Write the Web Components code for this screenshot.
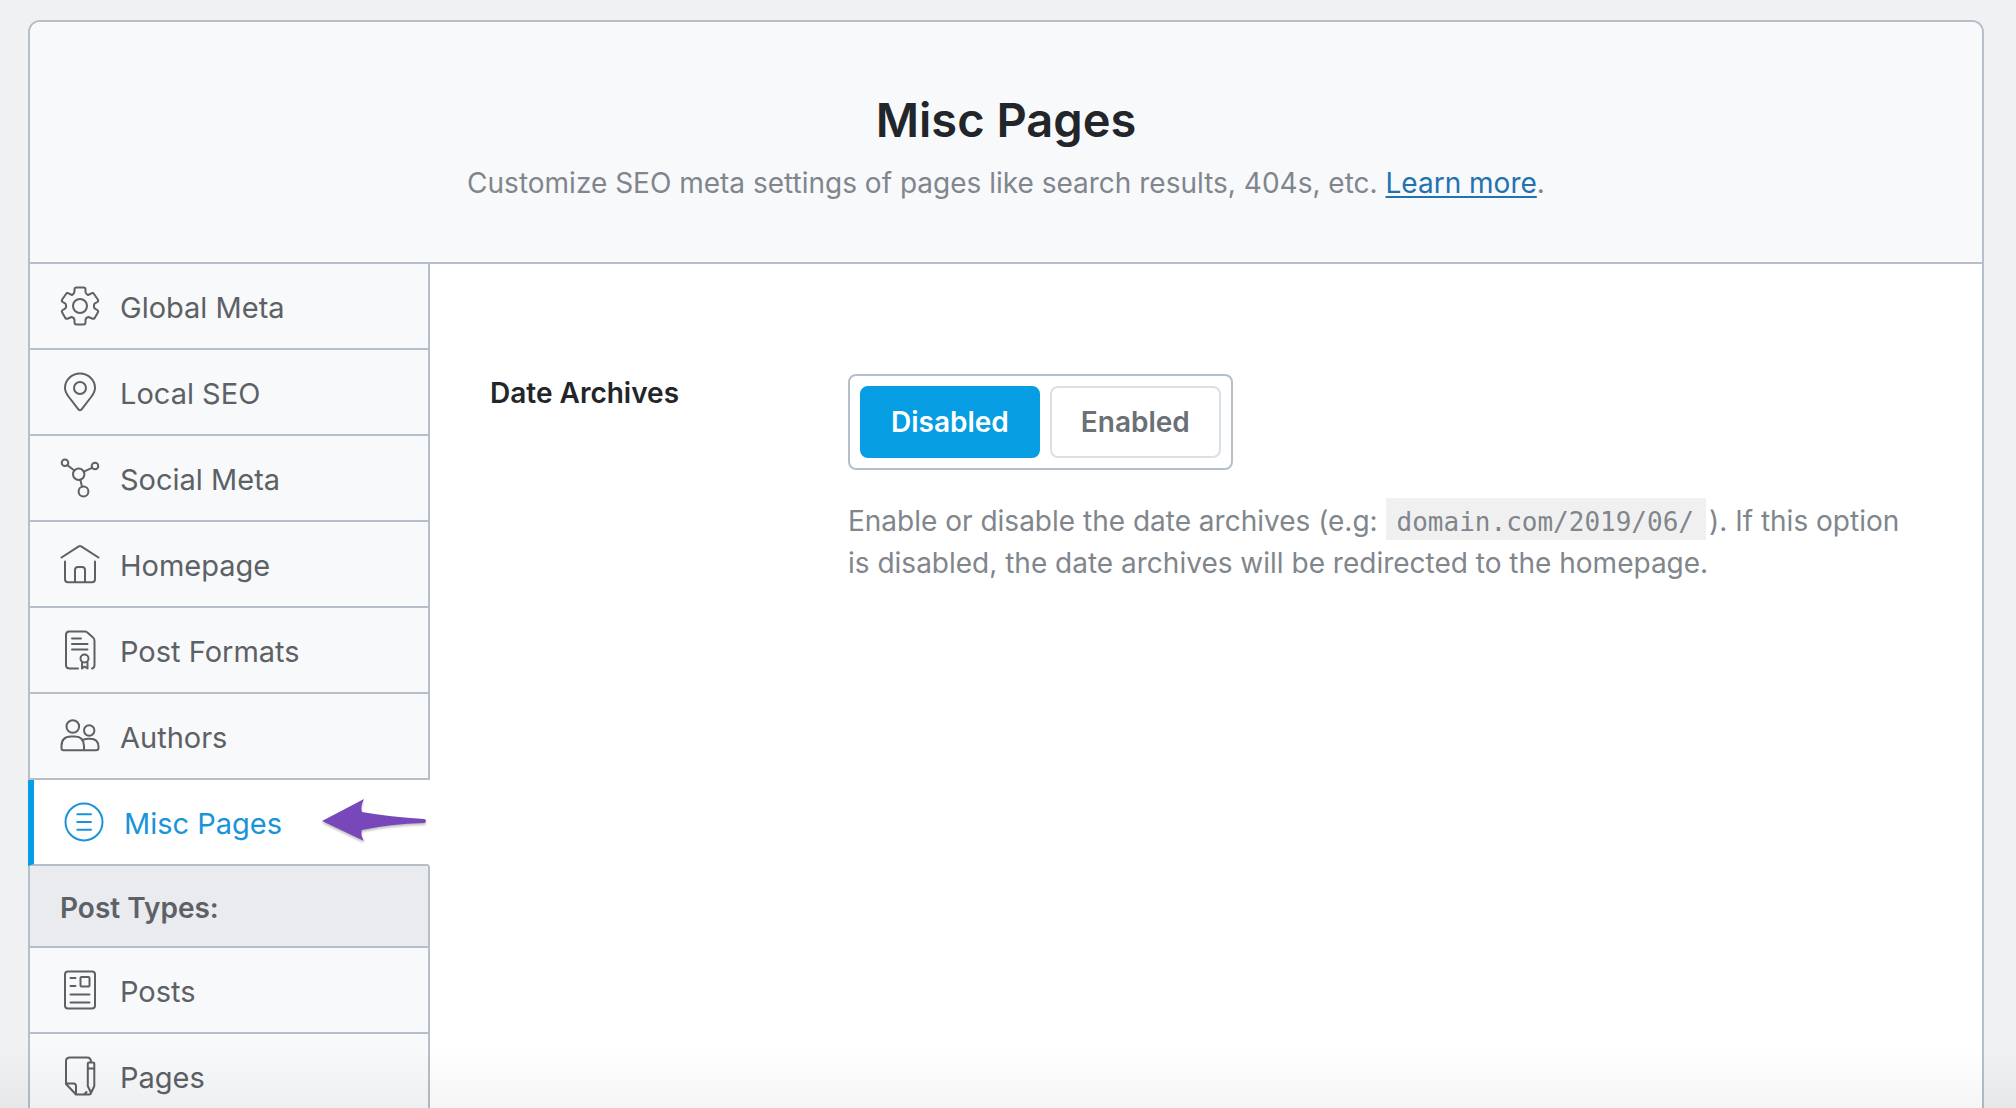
<!DOCTYPE html>
<html lang="en">
<head>
<meta charset="utf-8">
<title>Misc Pages</title>
<style>
    body {
        margin: 0;
        font-family: Inter, "Liberation Sans", sans-serif;
        background: #eff1f3;
    }
</style>
</head>
<body>

<settings-page>
    <settings-header slot="header">
        <span slot="title">Misc Pages</span>
        Customize SEO meta settings of pages like search results, 404s, etc. <a href="#learn">Learn more</a>.
    </settings-header>

    <settings-nav slot="nav">
        <nav-item icon="gear">Global Meta</nav-item>
        <nav-item icon="pin">Local SEO</nav-item>
        <nav-item icon="social">Social Meta</nav-item>
        <nav-item icon="home">Homepage</nav-item>
        <nav-item icon="format">Post Formats</nav-item>
        <nav-item icon="users">Authors</nav-item>
        <nav-item icon="list" active>Misc Pages<pointer-arrow slot="end"></pointer-arrow></nav-item>
        <nav-heading>Post Types:</nav-heading>
        <nav-item icon="post">Posts</nav-item>
        <nav-item icon="page">Pages</nav-item>
    </settings-nav>

    <settings-field label="Date Archives">
        <toggle-group label="Date Archives" options="Disabled,Enabled" value="Disabled"></toggle-group>
        <span slot="help">Enable or disable the date archives (e.g: <code-sample>domain.com/2019/06/</code-sample>). If this option is disabled, the date archives will be redirected to the homepage.</span>
    </settings-field>
</settings-page>

<script>
// 40x40 line icons
const ICONS = {
    gear: '<path d="M14.500 5V3.500Q14.500 1.500 16.500 1.500H23.500Q25.500 1.500 25.500 3.500V6Q25.700 8 28 9L31.500 7.300Q33.300 6.700 34 8L37.800 13.500Q38.700 15 37.300 16L34.500 17.700Q33.300 20 34.500 22.300L37.300 24Q38.700 25 37.800 26.500L34.700 32Q33.600 33.300 32 32.500L28.500 31Q25.700 31.500 25.500 34V36.500Q25.500 38.500 23.500 38.500H16.500Q14.500 38.500 14.500 36.500V34Q14.300 31.500 11.500 31L8 32.500Q6.400 33.300 5.300 32L2.200 26.500Q1.300 25 2.700 24L5.500 22.300Q6.700 20 5.500 17.700L2.700 16Q1.300 15 2.200 13.500L6 8Q6.700 6.700 8.500 7.300L12 9Q14.300 8 14.500 5Z"/><circle cx="20" cy="20" r="7"/>',
    pin: '<path d="M20 38.300C18.800 38.300 18.300 37.300 17.600 36.300L8.500 24.500C6.200 21.300 5 19 5 16A15 14.500 0 0 1 35 16C35 19 33.800 21.300 31.500 24.500L22.400 36.300C21.700 37.300 21.200 38.300 20 38.300Z"/><circle cx="20" cy="16" r="6"/>',
    social: '<circle cx="5" cy="4.800" r="3.300"/><circle cx="35" cy="8" r="3.300"/><circle cx="18.700" cy="16.200" r="5.700"/><circle cx="23.500" cy="33.500" r="4.900"/><path d="M7.500 7.200L14.300 12.500M32 9.800L23.800 13.700M20.300 21.800L22 28.600"/>',
    home: '<path d="M1.500 13.500L18.800 2.300Q20 1.500 21.200 2.300L38.500 13.500M5 17.500V35Q5 38.300 8 38.300H32Q35 38.300 35 35V17.500M15 38V26Q15 23 18 23H22Q25 23 25 26V38"/>',
    format: '<path d="M18 38.500H10Q6 38.500 6 35V5Q6 1.500 9 1.500H25Q26.500 1.500 28 3L33 7.500Q34.500 8.500 34.500 11V35Q34.500 38 32 38.500M12 8.500H21M12 14H27.500M12 19.500H27.500"/><circle cx="24.500" cy="28.500" r="4"/><path d="M22 32.500V38.500L24.500 36.500L27.500 38.500V32.500"/>',
    users: '<circle cx="12.800" cy="10.500" r="6.300"/><circle cx="29.200" cy="14.500" r="5.200"/><path d="M1.500 32V30Q1.500 20.500 11 20.500H15Q24 20.500 24 30V34.200H3.500Q1.500 34.200 1.500 32ZM24 34.200H36Q38.500 34.200 38.500 32V31Q38.500 22.800 30 22.800H28Q24.500 22.800 22 24.500"/>',
    list: '<circle cx="20" cy="20" r="18.500"/><path d="M13.300 12.200H27M13.300 20H27M13.300 27.800H27"/>',
    post: '<rect x="5" y="1.500" width="30" height="37" rx="3"/><path d="M10.500 8H15.500M10.500 16H15.500M10.500 24.500H29.500M10.500 32.500H29.500"/><rect x="20.500" y="7" width="9" height="9.500" rx="1"/>',
    page: '<path d="M26.500 36L24 38.500H16L6 28V5Q6 1.500 10 1.500H27Q31 1.500 31 6M6 27.500H13.500Q16 27.500 16 30V38M24 38.500H29Q31 38.500 31 36.500M27.800 7.500Q27.800 6.500 29 6.500H33Q34.300 6.500 34.300 7.500V30L31.500 36H30.600L27.800 30ZM28 12.500H34"/>'
};

class SettingsPage extends HTMLElement {

    constructor() {
        super();
        this.attachShadow({ mode: 'open' });
    }

    connectedCallback() {
        this.shadowRoot.innerHTML = /* html */`
            <style>
            :host {
                display: block;
                box-sizing: border-box;
                height: 100vh;
                padding: 20px 32px 20px 28px;
                overflow: hidden auto;
                scrollbar-width: none;
            }
            .card {
                border: 2px solid #b5bfc9;
                border-radius: 12px;
                background: #fff;
            }
            .body {
                display: flex;
                align-items: stretch;
            }
            main {
                flex: 1;
                min-width: 0;
                padding: 110px 60px;
            }
            /* soft shade along the bottom edge of the window */
            .fade {
                position: fixed;
                left: 0;
                right: 0;
                bottom: 0;
                height: 60px;
                background: linear-gradient(transparent, rgba(0, 0, 0, .04));
                pointer-events: none;
            }
            </style>
            <div class="card">
                <slot name="header"></slot>
                <div class="body">
                    <slot name="nav"></slot>
                    <main><slot></slot></main>
                </div>
            </div>
            <div class="fade"></div>
        `;
    }

}

class SettingsHeader extends HTMLElement {

    constructor() {
        super();
        this.attachShadow({ mode: 'open' });
    }

    connectedCallback() {
        this.shadowRoot.innerHTML = /* html */`
            <style>
            :host {
                display: block;
                padding: 68px 40px 58px;
                border-bottom: 2px solid #b5bfc9;
                border-radius: 10px 10px 0 0;
                background: #f8f9fb;
                text-align: center;
            }
            h1 {
                margin: 0;
                font-size: 47px;
                font-weight: 600;
                line-height: 60px;
                color: #222529;
            }
            p {
                margin: 12px 0 0;
                font-size: 28px;
                line-height: 42px;
                color: #80868c;
            }
            ::slotted(a) {
                color: #2271b1;
                text-decoration: underline;
                text-decoration-thickness: 2px;
                text-underline-offset: 3px;
            }
            </style>
            <h1><slot name="title"></slot></h1>
            <p><slot></slot></p>
        `;
    }

}

class SettingsNav extends HTMLElement {

    constructor() {
        super();
        this.attachShadow({ mode: 'open' });
    }

    connectedCallback() {
        this.shadowRoot.innerHTML = /* html */`
            <style>
            :host {
                display: block;
                flex: none;
                width: 400px;
            }
            </style>
            <nav><slot></slot></nav>
        `;
    }

}

class NavItem extends HTMLElement {

    constructor() {
        super();
        this.attachShadow({ mode: 'open' });
    }

    connectedCallback() {
        this.shadowRoot.innerHTML = /* html */`
            <style>
            :host {
                display: block;
                border-right: 2px solid #b5bfc9;
                border-bottom: 2px solid #b5bfc9;
                background: #f8f9fb;
                color: #5d6165;
            }
            :host([active]) {
                margin-left: -2px;
                border-left: 6px solid #069de3;
                border-right-color: #fff;
                background: #fff;
                color: #1a94d8;
            }
            a {
                display: flex;
                align-items: center;
                gap: 20px;
                height: 84px;
                padding: 0 0 0 30px;
                font-size: 29px;
                color: inherit;
                text-decoration: none;
            }
            svg {
                flex: none;
                width: 40px;
                height: 40px;
                fill: none;
                stroke: currentColor;
                stroke-width: 2;
                stroke-linecap: round;
                stroke-linejoin: round;
            }
            span {
                padding-top: 2px;
            }
            ::slotted([slot=end]) {
                margin-left: auto;
            }
            </style>
            <a href="#${this.getAttribute('icon')}">
                <svg viewBox="0 0 40 40" aria-hidden="true">${ICONS[this.getAttribute('icon')]}</svg>
                <span><slot></slot></span>
                <slot name="end"></slot>
            </a>
        `;
    }

}

class NavHeading extends HTMLElement {

    constructor() {
        super();
        this.attachShadow({ mode: 'open' });
    }

    connectedCallback() {
        this.shadowRoot.innerHTML = /* html */`
            <style>
            :host {
                display: block;
                padding: 4px 30px 0;
                border-right: 2px solid #b5bfc9;
                border-bottom: 2px solid #b5bfc9;
                background: #e9ebef;
                font-size: 28px;
                font-weight: 600;
                line-height: 76px;
                color: #5d6165;
            }
            </style>
            <slot></slot>
        `;
    }

}

class PointerArrow extends HTMLElement {

    constructor() {
        super();
        this.attachShadow({ mode: 'open' });
    }

    connectedCallback() {
        this.shadowRoot.innerHTML = /* html */`
            <style>
            :host {
                display: block;
            }
            svg {
                display: block;
                width: 106px;
                height: 48px;
                fill: #7848ba;
                filter: drop-shadow(0 2px 1px rgba(0, 0, 0, .25));
            }
            </style>
            <svg viewBox="0 0 106 48" aria-hidden="true">
                <path d="M0 23L42 1Q38 9 40 14Q68 19 102 21Q104 21 104 23Q104 25 102 25Q68 26 40 32Q38 36 42 43Z"/>
            </svg>
        `;
    }

}

class SettingsField extends HTMLElement {

    constructor() {
        super();
        this.attachShadow({ mode: 'open' });
    }

    connectedCallback() {
        this.shadowRoot.innerHTML = /* html */`
            <style>
            :host {
                display: flex;
            }
            .label {
                flex: none;
                width: 358px;
                font-size: 28px;
                font-weight: 600;
                line-height: 38px;
                color: #222529;
            }
            .control {
                flex: 1;
                min-width: 0;
            }
            p {
                margin: 30px 0 0;
                font-size: 28px;
                line-height: 42px;
                color: #80868c;
            }
            </style>
            <div class="label">${this.getAttribute('label')}</div>
            <div class="control">
                <slot></slot>
                <p><slot name="help"></slot></p>
            </div>
        `;
    }

}

class CodeSample extends HTMLElement {

    constructor() {
        super();
        this.attachShadow({ mode: 'open' });
    }

    connectedCallback() {
        this.shadowRoot.innerHTML = /* html */`
            <style>
            :host {
                display: inline;
            }
            code {
                margin-right: 3px;
                padding: 9px 12px 3px 11px;
                background: #f0f0f1;
                font-family: "DejaVu Sans Mono", monospace;
                font-size: 26px;
                line-height: 1;
            }
            </style>
            <code><slot></slot></code>`;
    }

}

class ToggleGroup extends HTMLElement {

    constructor() {
        super();
        this.attachShadow({ mode: 'open' });
    }

    connectedCallback() {
        this.render();
        this.shadowRoot.addEventListener('click', e => {
            const button = e.target.closest('button');
            if (button) this.select(button);
        });
    }

    select(button) {
        this.setAttribute('value', button.value);
        this.shadowRoot.querySelectorAll('button').forEach(b => {
            b.setAttribute('aria-pressed', b === button);
        });
    }

    render() {
        const value = this.getAttribute('value');
        const options = this.getAttribute('options').split(',');

        this.shadowRoot.innerHTML = /* html */`
            <style>
            :host {
                display: block;
            }
            .group {
                display: inline-flex;
                gap: 10px;
                padding: 10px;
                border: 2px solid #b5bfc9;
                border-radius: 8px;
                vertical-align: top;
            }
            button {
                padding: 0 29px;
                border: 2px solid #dcdfe3;
                border-radius: 8px;
                background: #fff;
                font-family: inherit;
                font-size: 28px;
                font-weight: 600;
                line-height: 68px;
                color: #6b7076;
                cursor: pointer;
            }
            button[aria-pressed=true] {
                border-color: #069de3;
                background: #069de3;
                color: #fff;
            }
            </style>
            <div class="group" role="group" aria-label="${this.getAttribute('label')}">
                ${options.map(option => `<button type="button" value="${option}" aria-pressed="${option === value}">${option}</button>`).join('')}
            </div>
        `;
    }

}

customElements.define('settings-page', SettingsPage);
customElements.define('settings-header', SettingsHeader);
customElements.define('settings-nav', SettingsNav);
customElements.define('nav-item', NavItem);
customElements.define('nav-heading', NavHeading);
customElements.define('pointer-arrow', PointerArrow);
customElements.define('settings-field', SettingsField);
customElements.define('code-sample', CodeSample);
customElements.define('toggle-group', ToggleGroup);
</script>
</body>
</html>
